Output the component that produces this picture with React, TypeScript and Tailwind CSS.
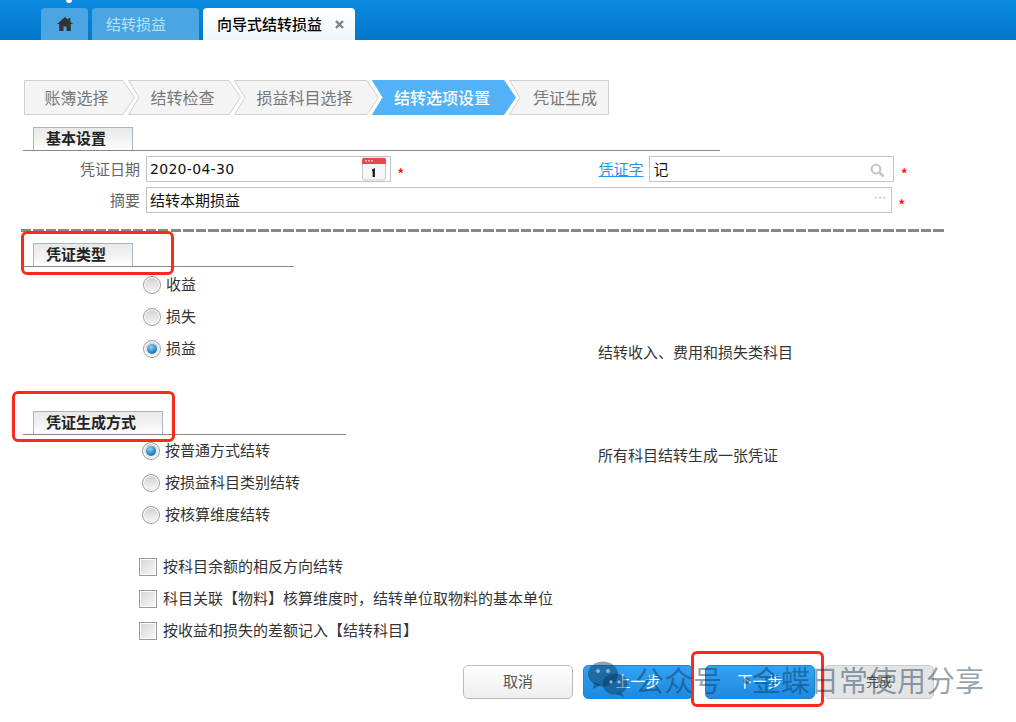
import type { ReactNode } from 'react'

const cjk = 'font-["Noto_Sans_CJK_SC","Liberation_Sans",sans-serif]'

const steps = [
  { label: '账簿选择', width: 111, first: true },
  { label: '结转检查', width: 113 },
  { label: '损益科目选择', width: 145 },
  { label: '结转选项设置', width: 144, active: true },
  { label: '凭证生成', width: 100, last: true },
]

const Step = ({ label, width, first, last, active }: { label: string; width: number; first?: boolean; last?: boolean; active?: boolean }) => {
  const h = 34
  const tip = width - 12
  const notch = first ? 0 : 11
  const right = last ? `L${width - 0.5} 0.5 L${width - 0.5} ${h + 0.5}` : `L${tip} 0.5 L${width - 0.5} ${h / 2 + 0.5} L${tip} ${h + 0.5}`
  const d = `M0.5 0.5 ${right} L0.5 ${h + 0.5} ${notch ? `L${notch} ${h / 2 + 0.5}` : ''} Z`
  return (
    <div className={`relative h-[35px] shrink-0 flex items-center justify-center ${first ? '' : '-ml-[7px]'}`} style={{ width }}>
      <svg className="absolute inset-0" width={width} height={35}>
        <path d={d} fill={active ? '#52b1f7' : '#f4f4f4'} stroke={active ? '#52b1f7' : '#cfcfcf'} />
      </svg>
      <span className={`relative -mt-[2px] text-[16px] ${active ? 'text-white font-medium' : 'text-[#777]'} ${first ? 'pr-[6px]' : last ? 'pl-[12px]' : 'pr-[4px]'}`}>{label}</span>
    </div>
  )
}

const SectionTitle = ({ title, line, tab }: { title: string; line: string; tab: string }) => (
  <div className={`ml-[23px] pl-[10px] border-b border-[#888] ${line}`}>
    <div className={`h-[23px] border border-b-0 border-[#a9b6c2] bg-gradient-to-b from-[#e9e9e9] via-[#f1f1f1] to-white pl-[12px] text-[15px] leading-[20px] font-bold text-[#222] ${tab}`}>
      {title}
    </div>
  </div>
)

const Radio = ({ label, checked }: { label: string; checked?: boolean }) => (
  <div className="h-[32px] flex items-center gap-[5px] text-[15px] text-[#333]">
    <span className="size-[18px] rounded-full border border-[#9c9c9c] bg-gradient-to-b from-[#cfcfcf] to-[#f8f8f8] flex items-center justify-center shadow-[inset_0_0_0_1px_#fff]">
      {checked && <span className="size-[10px] rounded-full bg-[radial-gradient(circle_at_40%_30%,#8fd0f5,#1379b8_70%,#0d5c94)]" />}
    </span>
    <span className="-mt-[1px]">{label}</span>
  </div>
)

const Checkbox = ({ label }: { label: string }) => (
  <div className="h-[32px] flex items-center gap-[6px] text-[15px] text-[#333]">
    <span className="size-[18px] border border-[#999] bg-gradient-to-br from-[#d4d4d4] to-[#f9f9f9] shadow-[inset_0_0_0_1px_#fff]" />
    <span className="-mt-[2px]">{label}</span>
  </div>
)

const Field = ({ children, className }: { children: ReactNode; className: string }) => (
  <div className={`relative h-[26px] border border-[#c4c4c4] bg-white flex items-center pl-[3px] text-[#111] ${className}`}>
    {children}
  </div>
)

const Star = () => <span className="block text-[16px] leading-none text-[#f00] mt-[10px]">*</span>

const CalendarIcon = () => (
  <svg className="absolute right-[3px] top-0" width="26" height="24" viewBox="0 0 26 24">
    <rect x="1.5" y="1" width="23" height="22" rx="2" fill="#f6f6f6" stroke="#c9c9c9" />
    <path d="M1 7V3a2 2 0 0 1 2-2h20a2 2 0 0 1 2 2v4z" fill="#e8474c" />
    <rect x="4" y="3" width="2" height="1.5" fill="#f7b9bb" />
    <rect x="7" y="3" width="2" height="1.5" fill="#f7b9bb" />
    <rect x="10" y="3" width="2" height="1.5" fill="#f7b9bb" />
    <path d="M11 12.5l3-1.5v9h-2.4v-6l-.6.3z" fill="#222" />
  </svg>
)

const SearchIcon = () => (
  <svg className="absolute right-[8px] top-[6px]" width="15" height="15" viewBox="0 0 15 15" fill="none" stroke="#c4c4c4">
    <circle cx="6" cy="6" r="4.4" strokeWidth="2" />
    <path d="M9.5 9.5L13.5 13.5" strokeWidth="2.6" />
  </svg>
)

const WeChat = () => (
  <svg width="40" height="36" viewBox="0 0 40 36" fill="currentColor">
    <ellipse cx="15" cy="13" rx="15" ry="12.5" />
    <path d="M6 21l-1 7 8-4z" />
    <ellipse cx="27" cy="23" rx="12.5" ry="10.5" />
    <path d="M33 31l3 5-8-3z" />
    <circle cx="10" cy="10" r="2" fill="#7fb6dc" />
    <circle cx="20" cy="10" r="2" fill="#7fb6dc" />
    <circle cx="23" cy="21" r="1.7" fill="#7fb6dc" />
    <circle cx="31" cy="21" r="1.7" fill="#7fb6dc" />
  </svg>
)

const btnBlue = 'w-[110px] h-[34px] rounded-[5px] border border-[#1b86d8] bg-gradient-to-b from-[#34a1f2] to-[#1c8ae0] text-white text-[15px] text-center leading-[30px]'

export default function App() {
  return (
    <div className={`relative w-[1016px] h-[722px] overflow-hidden bg-white ${cjk}`}>
      {/* top tabs */}
      <div className="h-10 flex items-end gap-[4px] pl-[41px] bg-gradient-to-b from-[#0a8be0] to-[#0377c9]">
        <div className="w-[47px] h-[32px] rounded-t-[4px] bg-[#4aa5e2] flex items-center justify-center">
          <svg width="16" height="14" viewBox="0 0 16 14" fill="#333">
            <path d="M8 0L0 7h2.2v7h4.3V9.5h3V14h4.3V7H16l-2.6-2.3V1h-2v1.9z" />
          </svg>
        </div>
        <div className="w-[107px] h-[32px] rounded-t-[4px] bg-[#4aa5e2] text-[#b9e1fb] text-[15px] leading-[32px] pl-[14px]">结转损益</div>
        <div className="w-[152px] h-[32px] rounded-t-[4px] bg-gradient-to-b from-white to-[#eef5fb] text-black text-[15px] font-medium leading-[32px] pl-[14px] flex justify-between items-center pr-[11px]">
          向导式结转损益
          <svg width="9" height="9" viewBox="0 0 9 9" stroke="#808080" strokeWidth="2.4">
            <path d="M1 1l7 7M8 1L1 8" />
          </svg>
        </div>
      </div>

      {/* wizard steps */}
      <div className="mt-10 ml-[24px] flex">
        {steps.map(s => <Step key={s.label} {...s} />)}
      </div>

      <div className="mt-[12px]">
        <SectionTitle title="基本设置" line="w-[697px]" tab="w-[100px]" />
      </div>

      <div className="mt-[5px] flex items-start">
        <div className="w-[140px] text-right text-[15px] leading-[26px] text-[#666]">凭证日期</div>
        <Field className="ml-[6px] w-[245px] font-['DejaVu_Sans',sans-serif] text-[14px] tracking-[0.3px]">2020-04-30<CalendarIcon /></Field>
        <div className="ml-[6px]"><Star /></div>
        <a className="ml-[194px] text-[15px] leading-[26px] text-[#1e96ee] underline w-[45px]">凭证字</a>
        <Field className="ml-[6px] w-[245px] text-[15px]">记<SearchIcon /></Field>
        <div className="ml-[6px]"><Star /></div>
      </div>
      <div className="mt-[5px] flex items-start">
        <div className="w-[140px] text-right text-[15px] leading-[26px] text-[#666]">摘要</div>
        <Field className="ml-[6px] w-[746px] text-[15px]">
          结转本期损益
          <span className="absolute right-[5px] top-[2px] font-['Liberation_Sans',sans-serif] text-[12px] leading-[14px] text-[#999]">···</span>
        </Field>
        <div className="ml-[6px]"><Star /></div>
      </div>

      <div className="mt-[16px] ml-[21px] w-[923px] h-[3px] bg-[repeating-linear-gradient(90deg,#888_0_10px,transparent_10px_12.5px)]" />

      <div className="mt-[11px]">
        <SectionTitle title="凭证类型" line="w-[271px]" tab="w-[100px]" />
      </div>
      <div className="mt-[2px] flex">
        <div className="ml-[143px] w-[455px]">
          <Radio label="收益" />
          <Radio label="损失" />
          <Radio label="损益" checked />
        </div>
        <div className="mt-[73px] text-[15px] leading-[20px] text-[#333]">结转收入、费用和损失类科目</div>
      </div>

      <div className="mt-[46px]">
        <SectionTitle title="凭证生成方式" line="w-[323px]" tab="w-[130px]" />
      </div>
      <div className="flex">
        <div className="ml-[142px] w-[456px]">
          <Radio label="按普通方式结转" checked />
          <Radio label="按损益科目类别结转" />
          <Radio label="按核算维度结转" />
        </div>
        <div className="mt-[10px] text-[15px] leading-[20px] text-[#333]">所有科目结转生成一张凭证</div>
      </div>

      <div className="mt-[20px] ml-[139px]">
        <Checkbox label="按科目余额的相反方向结转" />
        <Checkbox label="科目关联【物料】核算维度时，结转单位取物料的基本单位" />
        <Checkbox label="按收益和损失的差额记入【结转科目】" />
      </div>

      <div className="mt-[18px] ml-[463px] flex">
        <div className="w-[110px] h-[34px] rounded-[5px] border border-[#bbb] bg-gradient-to-b from-white to-[#eee] text-[#555] text-[15px] text-center leading-[30px]">取消</div>
        <div className={`ml-[10px] ${btnBlue}`}>上一步</div>
        <div className={`ml-[12px] ${btnBlue}`}>下一步</div>
        <div className="ml-[9px] w-[110px] h-[34px] rounded-[5px] border border-[#ccc] bg-[#e4e4e4] text-[#555] text-[13px] text-center leading-[30px]">完成</div>
      </div>

      {/* annotations pasted over the shot */}
      <div className="absolute left-[21px] top-[231px] w-[153px] h-[44px] rounded-[6px] border-[3px] border-[#fb2a1c]" />
      <div className="absolute left-[12px] top-[391px] w-[163px] h-[51px] rounded-[6px] border-[3px] border-[#fb2a1c]" />
      <div className="absolute left-[691px] top-[651px] w-[133px] h-[56px] rounded-[6px] border-[3px] border-[#fb2a1c]" />

      {/* watermark */}
      <div className="absolute left-[588px] top-[661px] flex items-center text-[29px] leading-[36px] text-[rgba(10,50,80,0.45)]">
        <WeChat />
        <span className="ml-[7px]">公众号</span>
        <span className="ml-[10px] w-[8px]">·</span>
        <span className="ml-[12px]">金蝶日常使用分享</span>
      </div>

      <div className="absolute left-[66px] -top-[3px] size-[6px] rounded-full bg-white" />
    </div>
  )
}
